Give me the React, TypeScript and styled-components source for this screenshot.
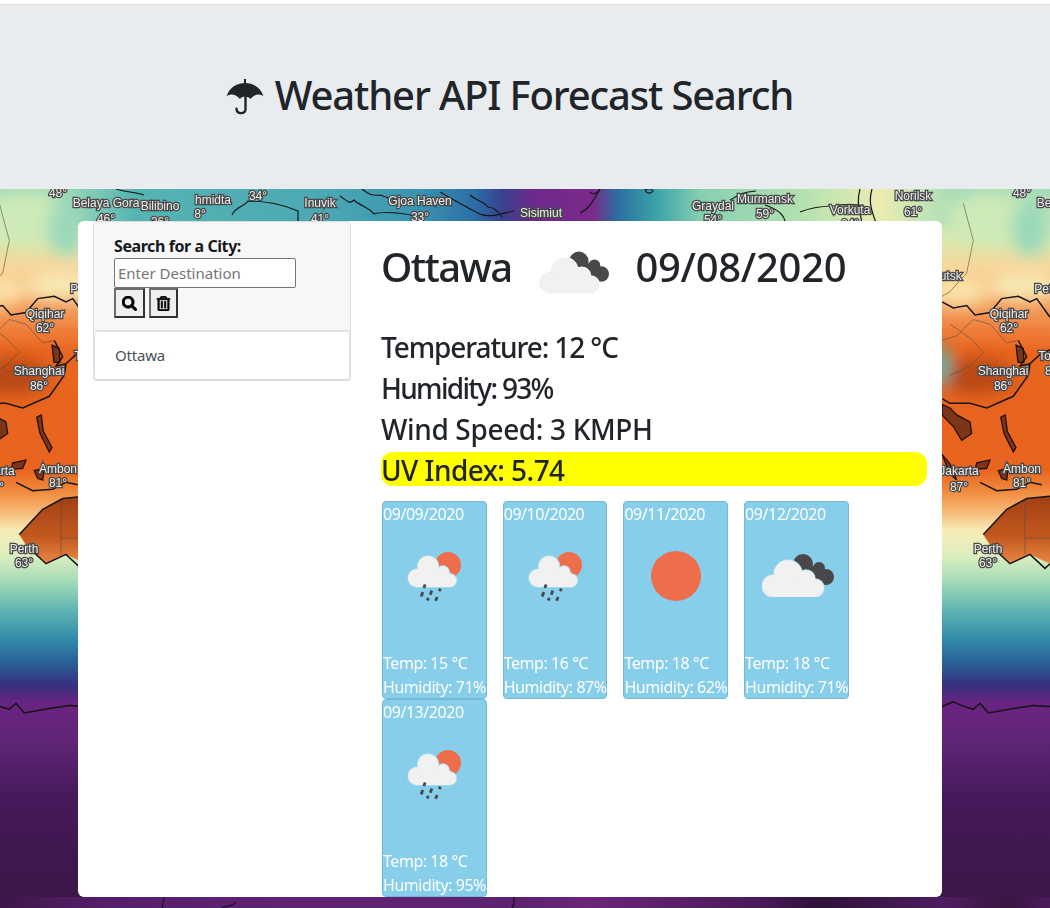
import React from 'react';
import styled, { createGlobalStyle } from 'styled-components';
import { FaSearch, FaRegTrashAlt } from 'react-icons/fa';

const FONT = `"Noto Sans", "Open Sans", "Liberation Sans", sans-serif`;

const Global = createGlobalStyle`
  html, body { margin: 0; padding: 0; background: #fff; overflow: hidden; }
  * { box-sizing: border-box; }
  body { font-family: ${FONT}; color: #212529; }
`;

const Page = styled.div`
  width: 1050px;
  height: 908px;
  padding-top: 4px;
  display: flex;
  flex-direction: column;
`;

const Header = styled.header`
  height: 185px;
  flex: none;
  background: #e9ecef;
  border-top: 1px solid #dcdcdc;
  display: flex;
  align-items: center;
  justify-content: center;
  gap: 11px;
  padding: 0 31px 4px 0;
`;

const Title = styled.h1`
  margin: 0;
  font-size: 40px;
  font-weight: 500;
  line-height: 48px;
  letter-spacing: -1.15px;
  color: #212529;
`;

const Stage = styled.main`
  position: relative;
  flex: 1;
  padding: 32px 108px 11px 78px;
  overflow: hidden;
`;

const MapArt = styled.svg`
  position: absolute;
  inset: 0;
  width: 1050px;
  height: 719px;
`;

const MapText = styled.text`
  font-family: "Liberation Sans", sans-serif;
  font-size: 12px;
  fill: #ececec;
  stroke: #4a4a4a;
  stroke-width: 2.6px;
  paint-order: stroke;
  text-anchor: middle;
`;

const Sheet = styled.div`
  position: relative;
  height: 676px;
  background: #fff;
  border-radius: 6px;
  display: grid;
  grid-template-columns: 288px 576px;
`;

const Side = styled.aside`
  padding: 0 15px;
`;

const SideCard = styled.div`
  border: 1px solid #dcdcdc;
  border-bottom-width: 2px;
  border-radius: 4px;
  overflow: hidden;
  background: #fff;
`;

const SearchForm = styled.form`
  height: 109px;
  padding: 13px 20px 0;
  background: #f7f7f7;
  border-bottom: 1px solid #dcdcdc;
`;

const SearchLabel = styled.label`
  display: block;
  font-size: 16px;
  font-weight: 700;
  line-height: 23px;
  letter-spacing: -0.42px;
  color: #16181b;
`;

const SearchInput = styled.input`
  display: block;
  width: 182px;
  height: 30px;
  padding: 0 3px;
  border: 1px solid #767676;
  border-radius: 2px;
  background: #fff;
  font-family: ${FONT};
  font-size: 15px;
  letter-spacing: 0;
  &::placeholder { color: #757575; opacity: 1; }
`;

const ButtonRow = styled.div`
  display: flex;
  gap: 4px;
`;

const IconButton = styled.button<{ $w: number }>`
  width: ${(p) => p.$w}px;
  height: 30px;
  padding: 0;
  display: flex;
  align-items: center;
  justify-content: center;
  background: #efefef;
  color: #000;
  border: 2px solid;
  border-color: #6e6e6e #333 #333 #6e6e6e;
  font-size: 15px;
  svg path { stroke: currentColor; stroke-width: 24px; }
`;

const CityItem = styled.div`
  height: 48px;
  padding: 0 20px 2px;
  display: flex;
  align-items: center;
  font-size: 15px;
  letter-spacing: -0.2px;
  color: #495057;
  border: 1px solid #e4e4e4;
  border-bottom: 0;
  border-radius: 4px;
`;

const Content = styled.section`
  padding: 0 15px;
`;

const CityHeading = styled.div`
  height: 108px;
  padding-top: 14px;
  display: flex;
  align-items: flex-start;
`;

const CityTitle = styled.h2<{ $gap: number; $ls: number }>`
  margin: 0 ${(p) => p.$gap}px 0 0;
  font-size: 40px;
  font-weight: 500;
  line-height: 64px;
  letter-spacing: ${(p) => p.$ls}px;
`;

const HeadingIcon = styled.svg`
  width: 70px;
  height: 43px;
  margin: 16px 26px 0 0;
  flex: none;
`;

const Stat = styled.h3<{ $uv?: boolean; $ls: number }>`
  margin: 0 0 7.4px;
  height: 33.6px;
  font-size: 28px;
  font-weight: 500;
  line-height: 37px;
  letter-spacing: ${(p) => p.$ls}px;
  border-radius: 12px;
  background: ${(p) => (p.$uv ? '#ffff00' : 'transparent')};
`;

const Forecast = styled.div`
  display: flex;
  flex-wrap: wrap;
  padding: 8px 0 0 1px;
`;

const Day = styled.article`
  width: 104.7px;
  height: 198px;
  margin-right: 16px;
  background: #87ceeb;
  border: 1px solid #78b8d2;
  border-radius: 4px;
  color: #fff;
  font-size: 16px;
  letter-spacing: -0.45px;
  line-height: 24px;
  white-space: nowrap;
`;

const DayLine = styled.div``;

const IconSlot = styled.div`
  height: 100px;
  margin-bottom: 25px;
  display: flex;
  align-items: center;
  justify-content: center;
`;

const halo = (fill: string, stroke: string, shapes: React.ReactNode) => (
  <>
    <g fill={stroke} stroke={stroke} strokeWidth={1.6}>{shapes}</g>
    <g fill={fill}>{shapes}</g>
  </>
);

const RainIcon = () => {
  const cloud = (
    <>
      <circle cx="13" cy="32" r="9" />
      <circle cx="24" cy="20.5" r="10.5" />
      <circle cx="39" cy="26" r="6" />
      <circle cx="46" cy="34.5" r="6.5" />
      <rect x="13" y="27" width="33" height="14" />
    </>
  );
  return (
    <svg width="60" height="60" viewBox="0 0 60 60">
      <circle cx="44" cy="19" r="13" fill="#ee6e4c" />
      {halo('#f1f1f1', '#a9dcf0', cloud)}
      <g stroke="#48484a" strokeWidth="2.8" strokeLinecap="butt">
        <path d="M21.2 38.4l-1.4 3.6" />
        <path d="M18.8 46l-1.6 4.4" />
        <path d="M27.8 44.4l-1.6 4.4" />
        <path d="M36.4 42.6l-1.2 2.6" />
        <path d="M24.6 52l-1.6 2.4" />
        <path d="M33.2 51l-1.6 3.8" />
      </g>
    </svg>
  );
};

const SunIcon = () => (
  <svg width="52" height="52" viewBox="0 0 52 52">
    <circle cx="26" cy="26" r="25" fill="#ee6e4c" />
  </svg>
);

const CloudShapes = ({ gap }: { gap: string }) => {
  const dark = (
    <>
      <circle cx="41" cy="10" r="10" />
      <circle cx="57" cy="14" r="6" />
      <circle cx="64" cy="23" r="8" />
      <path d="M36 12h26v19H40z" />
    </>
  );
  const light = (
    <>
      <circle cx="11" cy="32" r="11" />
      <circle cx="26" cy="20" r="14" />
      <circle cx="44" cy="25" r="9" />
      <circle cx="53" cy="34" r="9" />
      <rect x="11" y="28" width="42" height="15" />
    </>
  );
  return (
    <>
      <g fill="#48484a">{dark}</g>
      {halo('#f1f1f1', gap, light)}
    </>
  );
};

const CloudIcon = () => (
  <svg width="72" height="43" viewBox="0 0 72 43" style={{ marginLeft: 3 }}>
    <CloudShapes gap="#a9dcf0" />
  </svg>
);

const Umbrella = () => (
  <svg width="38" height="36" viewBox="0 0 38 36" fill="none" style={{ flex: 'none', marginTop: 4 }}>
    <path d="M19 0v5" stroke="#212529" strokeWidth="2" />
    <path
      d="M.5 17.5C3 9 10.5 4 19 4s16 5 18.5 13.5C35 14.5 29 14.5 24.5 20 22.5 16.5 15.5 16.5 14 20 9.5 14.5 3 14.5.5 17.5z"
      fill="#212529"
    />
    <path d="M19.5 16v14.5c0 5-9 5-9-.8" stroke="#212529" strokeWidth="2.4" strokeLinecap="round" />
  </svg>
);

type Pt = [number, number];
const toPath = (pts: Pt[], close = false) =>
  pts.map((p, i) => `${i ? 'L' : 'M'}${(p[0] / 3 - 34).toFixed(1)} ${(180 + p[1] / 2.15).toFixed(1)}`).join('') +
  (close ? 'Z' : '');

const thick: Pt[][] = [
  [[36, 262], [70, 275], [110, 270], [135, 290], [180, 285], [215, 255], [265, 250], [300, 262], [320, 255], [360, 295]],
  [[265, 345], [290, 380], [270, 400], [300, 395], [295, 420], [250, 465], [170, 490], [120, 480], [60, 480], [36, 470]],
  [[150, 650], [200, 668], [260, 665], [300, 650], [335, 655]],
  [[36, 1132], [70, 1122], [95, 1130], [130, 1138], [150, 1125], [175, 1146], [250, 1136], [310, 1130], [360, 1132]],
  [[300, 395], [330, 375], [360, 365]],
  [[160, 762], [230, 708], [290, 685], [360, 680]],
  [[180, 785], [240, 825], [300, 805], [345, 835], [360, 825]],
];
const thin: Pt[][] = [
  [[36, 345], [80, 335], [130, 300], [180, 310], [230, 350], [265, 345]],
  [[100, 50], [130, 130], [110, 200], [60, 240], [36, 250]],
  [[60, 310], [120, 340], [160, 370], [120, 400], [60, 420]],
  [[285, 690], [285, 805]],
  [[285, 770], [360, 770]],
];
const australia: Pt[] = [[160, 762], [230, 708], [290, 685], [360, 680], [360, 825], [300, 805], [240, 825], [180, 785]];
const islands: Pt[][] = [
  [[212, 510], [226, 505], [232, 540], [258, 575], [250, 585], [222, 545]],
  [[140, 608], [180, 602], [170, 620], [135, 622]],
  [[205, 625], [235, 620], [230, 645], [215, 642]],
  [[36, 590], [60, 610], [80, 645], [60, 632]],
  [[258, 355], [280, 362], [282, 392], [264, 392]],
  [[36, 482], [60, 490], [80, 505], [120, 520], [125, 545], [95, 560], [70, 530], [36, 505]],
];

const labels: [string, number, number][] = [
  ['48°', 58, 197], ['Belaya Gora', 106, 207], ['46°', 106, 223], ['Bilibino', 160, 210], ['36°', 160, 226],
  ['hmidta', 213, 204], ['8°', 200, 218], ['34°', 258, 200], ['Inuvik', 320, 207], ['41°', 320, 223],
  ['Gjoa Haven', 420, 205], ['33°', 420, 221], ['Sisimiut', 541, 217], ['Graydal', 713, 210], ['54°', 713, 224],
  ['Murmansk', 765, 203], ['59°', 765, 218], ['Vorkuta', 850, 214], ['64°', 850, 228], ['Norilsk', 913, 200],
  ['61°', 913, 216], ['Qiqihar', 45, 318], ['62°', 45, 332], ['Shanghai', 39, 375], ['86°', 39, 390],
  ['Ambon', 58, 473], ['81°', 58, 487], ['Perth', 24, 553], ['63°', 24, 567], ['Jakarta', -5, 475],
  ['87°', -5, 491], ['Irkutsk', -20, 280], ['Petropavlovsk', 108, 293], ['Tokyo', 90, 360], ['88°', 90, 375],
];

const stripLines = [
  'M116 189c8 3 20 3 28 6',
  'M232 215c3-8 12-8 16-14 14 0 34 3 50 10v18',
  'M340 196c8 6 10 8 14 4 6 6 16 8 20 14 8-3 30-1 40 2',
  'M362 189c6 5 10 7 18 6 8 2 12 6 20 4',
  'M440 192c14 8 24 14 40 22 10 4 20 0 34-3',
  'M470 195c6 6 14 6 18 12 6 0 10 4 14 10',
  'M600 189c-6 10-10 20-20 24',
  'M600 189c-4 6-8 6-10 3',
  'M645 190c4-2 6-2 8 1-2 3-6 3-8-1z',
  'M730 200c10-6 14-8 26-9',
  'M765 205c12 4 20 10 20 18',
  'M800 212c10-4 20-6 34-6 10-2 18-2 30 0',
  'M860 189c-4 14 0 22 2 34M872 189c-4 14 0 22 4 34',
];

const BaseMap = () => (
  <g id="tile">
    <g filter="url(#soft)">
      <ellipse cx="25" cy="218" rx="42" ry="24" fill="#cdeab8" />
      <ellipse cx="66" cy="228" rx="18" ry="28" fill="#9ad8ba" />
      <ellipse cx="12" cy="376" rx="38" ry="18" fill="#b84a18" />
      <ellipse cx="-24" cy="365" rx="10" ry="20" fill="#58b6a8" />
      <ellipse cx="-5" cy="290" rx="30" ry="16" fill="#fbe0a6" />
      <ellipse cx="60" cy="285" rx="35" ry="14" fill="#f7e9b4" />
    </g>
    <path d={toPath(australia, true)} fill="url(#oz)" />
    {islands.map((d, i) => <path key={i} d={toPath(d, true)} fill="#7c3412" stroke="#1a0d06" strokeWidth="1.2" />)}
    {thick.map((d, i) => <path key={i} d={toPath(d)} fill="none" stroke="#141414" strokeWidth="1.5" />)}
    {thin.map((d, i) => <path key={i} d={toPath(d)} fill="none" stroke="#5b4a3a" strokeOpacity="0.65" strokeWidth="0.9" />)}
  </g>
);

const TILE = 964;
const WorldMap = () => (
  <MapArt viewBox="0 189 1050 719" aria-hidden>
    <defs>
      <linearGradient id="oz" gradientUnits="userSpaceOnUse" x1="0" y1="497" x2="0" y2="565">
        <stop offset="0" stopColor="#a23f14" />
        <stop offset="0.6" stopColor="#c45a20" />
        <stop offset="1" stopColor="#ea8a48" />
      </linearGradient>
      <linearGradient id="lat" gradientUnits="userSpaceOnUse" x1="0" y1="189" x2="0" y2="908">
        <stop offset="0" stopColor="#a6dcb8" />
        <stop offset="0.07" stopColor="#d8e9b0" />
        <stop offset="0.11" stopColor="#f9d59a" />
        <stop offset="0.155" stopColor="#f4a868" />
        <stop offset="0.2" stopColor="#ef7b38" />
        <stop offset="0.225" stopColor="#e9661f" />
        <stop offset="0.39" stopColor="#e8641f" />
        <stop offset="0.42" stopColor="#f08a3c" />
        <stop offset="0.45" stopColor="#f7bb78" />
        <stop offset="0.475" stopColor="#f7ecb8" />
        <stop offset="0.51" stopColor="#dcefbe" />
        <stop offset="0.545" stopColor="#a5dcb8" />
        <stop offset="0.585" stopColor="#5fb5b2" />
        <stop offset="0.63" stopColor="#2e86a8" />
        <stop offset="0.66" stopColor="#2a5e96" />
        <stop offset="0.69" stopColor="#35307e" />
        <stop offset="0.715" stopColor="#6a2482" />
        <stop offset="0.77" stopColor="#5f2475" />
        <stop offset="0.85" stopColor="#45195a" />
        <stop offset="1" stopColor="#3a1646" />
      </linearGradient>
      <linearGradient id="north" gradientUnits="userSpaceOnUse" x1="40" y1="0" x2="985" y2="0">
        <stop offset="0" stopColor="#a5dcb8" stopOpacity="0" />
        <stop offset="0.04" stopColor="#8ed2b6" />
        <stop offset="0.1" stopColor="#55b4b2" />
        <stop offset="0.3" stopColor="#4ca8b4" />
        <stop offset="0.4" stopColor="#3a94b0" />
        <stop offset="0.46" stopColor="#2c6ea6" />
        <stop offset="0.49" stopColor="#38408f" />
        <stop offset="0.52" stopColor="#6c2a8c" />
        <stop offset="0.585" stopColor="#7b2a8a" />
        <stop offset="0.61" stopColor="#2c6ca0" />
        <stop offset="0.65" stopColor="#3aa0a8" />
        <stop offset="0.7" stopColor="#86d0b0" />
        <stop offset="0.8" stopColor="#b0e0b0" />
        <stop offset="0.89" stopColor="#eaecb0" />
        <stop offset="0.93" stopColor="#c8e6b5" />
        <stop offset="0.98" stopColor="#a0dab8" stopOpacity="0.6" />
        <stop offset="1" stopColor="#a0dab8" stopOpacity="0" />
      </linearGradient>
      <linearGradient id="south" gradientUnits="userSpaceOnUse" x1="0" y1="0" x2="1050" y2="0">
        <stop offset="0" stopColor="#3d1648" />
        <stop offset="0.1" stopColor="#561e6a" />
        <stop offset="0.3" stopColor="#612372" />
        <stop offset="0.5" stopColor="#5c2270" />
        <stop offset="0.56" stopColor="#6c2578" />
        <stop offset="0.72" stopColor="#4a1a5a" />
        <stop offset="0.78" stopColor="#2e1238" />
        <stop offset="0.9" stopColor="#4e1c60" />
        <stop offset="0.96" stopColor="#38153f" />
        <stop offset="1" stopColor="#4a1a5c" />
      </linearGradient>
      <filter id="soft" x="-30%" y="-50%" width="160%" height="200%">
        <feGaussianBlur stdDeviation="8" />
      </filter>
      <filter id="lens" x="-5%" y="-5%" width="110%" height="110%">
        <feGaussianBlur stdDeviation="0.35" />
      </filter>
    </defs>
    <rect x="0" y="189" width="1050" height="719" fill="url(#lat)" />
    <rect x="40" y="189" width="945" height="36" fill="url(#north)" />
    <g filter="url(#lens)">
      <BaseMap />
      <use href="#tile" x={TILE} />
      {stripLines.map((d) => <path key={d} d={d} fill="none" stroke="#151515" strokeWidth="1.2" />)}
      {[0, TILE].map((dx) =>
        labels
          .filter(([, x]) => x + dx > -20 && x + dx < 1075)
          .map(([t, x, y]) => <MapText key={`${t}${dx}`} x={x + dx} y={y}>{t}</MapText>)
      )}
    </g>
    <rect x="0" y="897" width="1050" height="11" fill="url(#south)" />
    <path d="M162 908c2-5 0-7 3-11M222 908c6-3 12-2 14-6M512 908c3-4 2-7 2-11" fill="none" stroke="#1c0c22" strokeWidth="1.2" />
  </MapArt>
);

const days = [
  { date: '09/09/2020', icon: <RainIcon />, temp: 15, hum: 71 },
  { date: '09/10/2020', icon: <RainIcon />, temp: 16, hum: 87 },
  { date: '09/11/2020', icon: <SunIcon />, temp: 18, hum: 62 },
  { date: '09/12/2020', icon: <CloudIcon />, temp: 18, hum: 71 },
  { date: '09/13/2020', icon: <RainIcon />, temp: 18, hum: 95 },
];

export default function App() {
  return (
    <Page>
      <Global />
      <Header>
        <Umbrella />
        <Title>Weather API Forecast Search</Title>
      </Header>
      <Stage>
        <WorldMap />
        <Sheet>
          <Side>
            <SideCard>
              <SearchForm onSubmit={(e) => e.preventDefault()}>
                <SearchLabel htmlFor="city">Search for a City:</SearchLabel>
                <SearchInput id="city" placeholder="Enter Destination" />
                <ButtonRow>
                  <IconButton $w={31} aria-label="Search"><FaSearch /></IconButton>
                  <IconButton $w={29} aria-label="Clear"><FaRegTrashAlt /></IconButton>
                </ButtonRow>
              </SearchForm>
              <CityItem>Ottawa</CityItem>
            </SideCard>
          </Side>
          <Content>
            <CityHeading>
              <CityTitle $gap={28} $ls={-1.6}>Ottawa</CityTitle>
              <HeadingIcon viewBox="0 0 72 43"><CloudShapes gap="#ffffff" /></HeadingIcon>
              <CityTitle $gap={0} $ls={-0.3}>09/08/2020</CityTitle>
            </CityHeading>
            <Stat $ls={-1.1}>Temperature: 12 °C</Stat>
            <Stat $ls={-1.7}>Humidity: 93%</Stat>
            <Stat $ls={-0.35}>Wind Speed: 3 KMPH</Stat>
            <Stat $uv $ls={-0.55}>UV Index: 5.74</Stat>
            <Forecast>
              {days.map((d) => (
                <Day key={d.date}>
                  <DayLine>{d.date}</DayLine>
                  <IconSlot>{d.icon}</IconSlot>
                  <DayLine>Temp: {d.temp} °C</DayLine>
                  <DayLine>Humidity: {d.hum}%</DayLine>
                </Day>
              ))}
            </Forecast>
          </Content>
        </Sheet>
      </Stage>
    </Page>
  );
}
